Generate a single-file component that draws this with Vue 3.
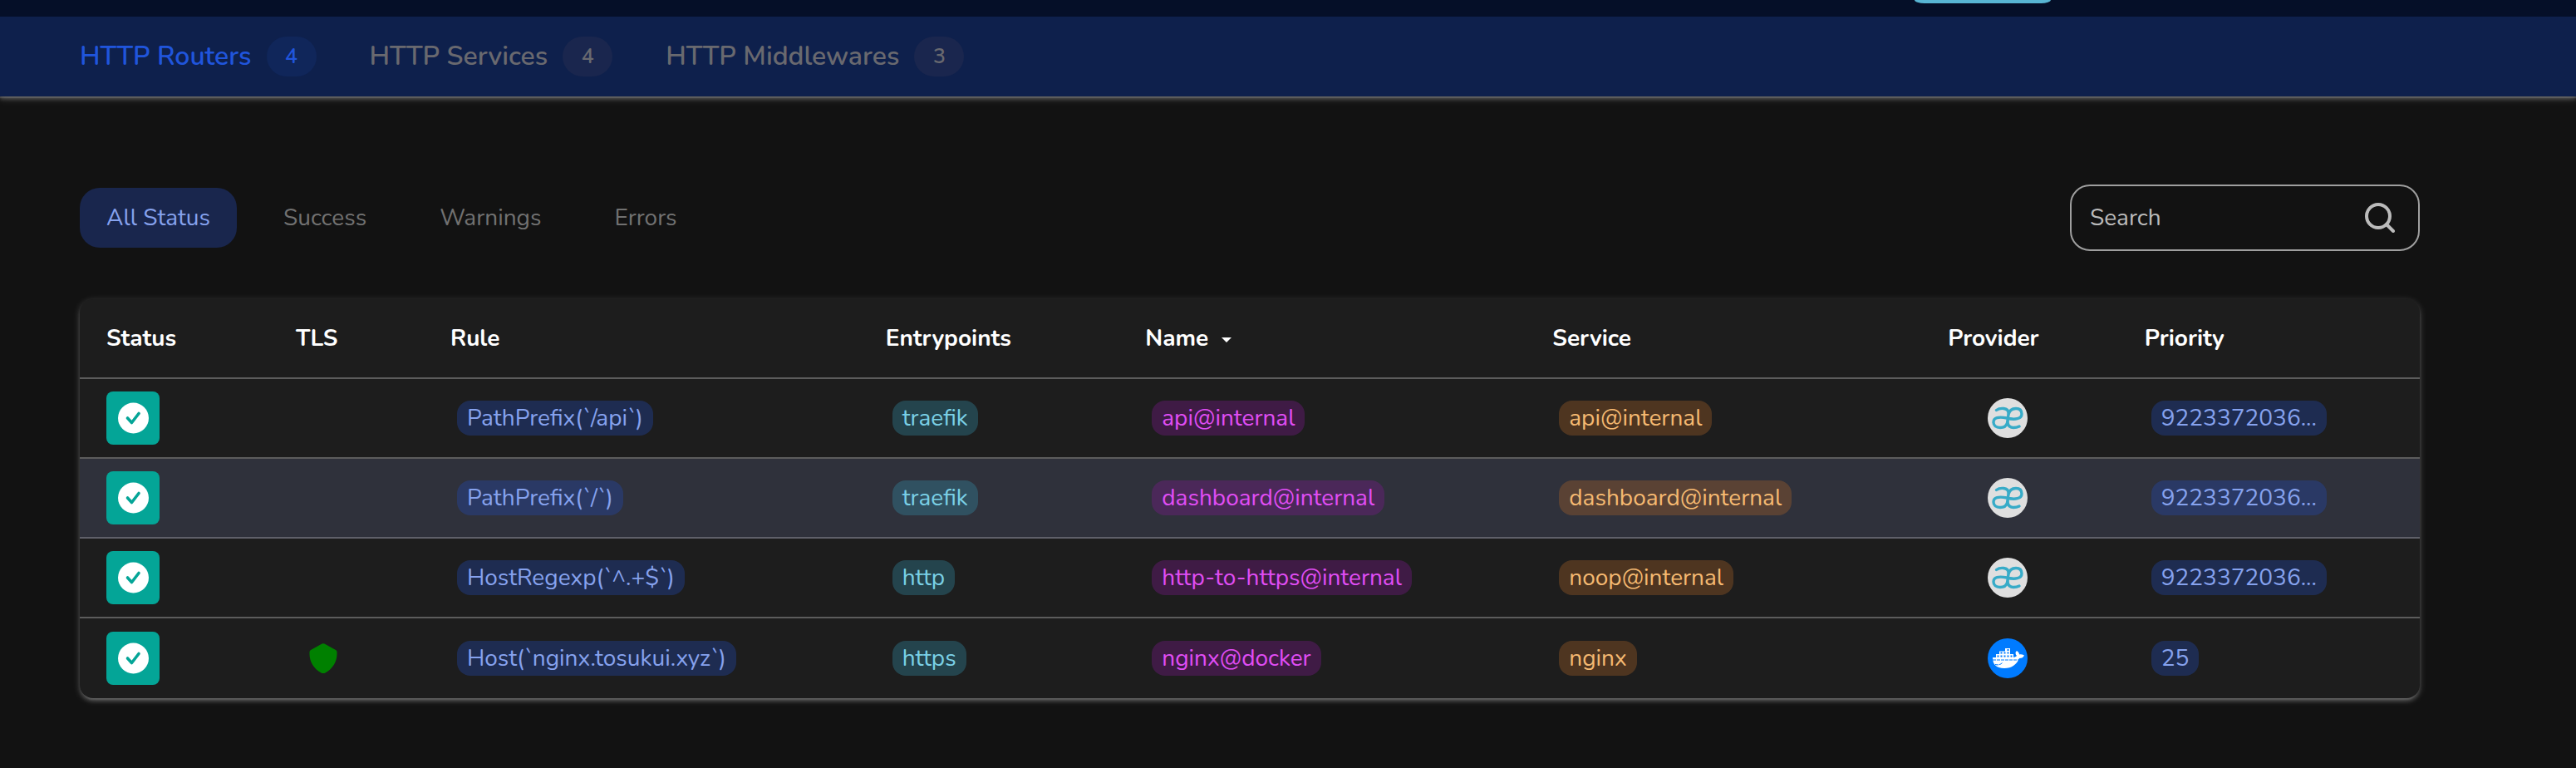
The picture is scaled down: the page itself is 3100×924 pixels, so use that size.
<template>
  <div class="page">
    <div class="top-bar"><span class="top-action"></span></div>

    <nav class="sub-nav">
      <a v-for="tab in tabs" :key="tab.label" href="#" :class="['tab', { active: tab.label === activeTab }]" @click.prevent="activeTab = tab.label">
        {{ tab.label }}
        <span class="tab-count">{{ tab.count }}</span>
      </a>
    </nav>

    <main class="content">
      <div class="toolbar">
        <div class="filters">
          <button
            v-for="filter in filters"
            :key="filter"
            type="button"
            :class="['filter', { active: filter === status }]"
            @click="status = filter"
          >{{ filter }}</button>
        </div>
        <label class="search">
          <input v-model="search" type="text" placeholder="Search" aria-label="Search" />
          <svg class="search-icon" viewBox="0 0 36 36" fill="none" stroke="#bbb" stroke-linecap="round">
            <circle cx="16" cy="16" r="14" stroke-width="4" />
            <path d="M26 26l8 8" stroke-width="4" />
          </svg>
        </label>
      </div>

      <div class="card">
        <table>
          <colgroup>
            <col v-for="col in columns" :key="col.key" :class="'col-' + col.key" />
          </colgroup>
          <thead>
            <tr>
              <th v-for="col in columns" :key="col.key">
                {{ col.label }}
                <svg v-if="col.key === 'name'" class="sort-icon" viewBox="0 0 12 6"><path d="M0 0h12l-6 6z" fill="#fff" /></svg>
              </th>
            </tr>
          </thead>
          <tbody>
            <tr v-for="row in rows" :key="row.name" :class="{ hovered: row.hovered }">
              <td>
                <span class="status-box">
                  <svg viewBox="0 0 38 38">
                    <circle cx="19.5" cy="19" r="18.500" fill="#fff" />
                    <path d="M12.500 19l5 5.500 8.500-11" fill="none" stroke="#04a597" stroke-width="3.600" stroke-linecap="round" stroke-linejoin="round" />
                  </svg>
                </span>
              </td>
              <td class="tls">
                <svg v-if="row.tls" class="shield" viewBox="0 0 34 36"><path d="M15.500.6q1.500-.9 3 0l13.500 7.400q1.500.9 1.500 2.500v2.500c0 9-5 17.500-14 22.500q-2.500 1-5 0C5.500 30.500.5 22 .5 13v-2.500q0-1.600 1.500-2.500z" fill="#008000" /></svg>
              </td>
              <td><span class="chip rule">{{ row.rule }}</span></td>
              <td><span class="chip entry">{{ row.entrypoint }}</span></td>
              <td><span class="chip name">{{ row.name }}</span></td>
              <td><span class="chip service">{{ row.service }}</span></td>
              <td class="provider">
                <svg v-if="row.provider === 'docker'" class="provider-icon" viewBox="0 0 48 48">
                  <circle cx="24" cy="24" r="24" fill="#007bff" />
                  <path d="M6 23h24c2 0 4-1 5-2-2-2-2-4.500 0-6 2 1 3 3 3 4.500 2-.5 4 0 6 1-1 2.500-3 3.500-6 3.500C35 31.500 29 36 20 36 10 36 6 31 6 23z" fill="#fff" />
                  <path d="M10 19h21v4H10zM14 15.500h13v4H14zM21 12h6v4h-6z" fill="#fff" />
                  <path d="M11.500 20.500h2v2h-2zm4 0h2v2h-2zm4 0h2v2h-2zm4 0h2v2h-2zm4 0h2v2h-2zm-12-4h2v2h-2zm4 0h2v2h-2zm4 0h2v2h-2zm0-3.500h2v2h-2z" fill="#007bff" />
                  <path d="M6 26h36M9 31.500c4 1 7 0 9-2.500" fill="none" stroke="#007bff" stroke-dasharray="4 1" />
                </svg>
                <svg v-else class="provider-icon" viewBox="0 0 48 48">
                  <circle cx="24" cy="24" r="24" fill="#dfdfdf" />
                  <path d="M10.500 14.500c4-3 14.500-3.500 14.500 3.500 0 4-1 8-1.500 12-1 3.500-4 5.500-8.500 5.500-5 0-8-2.500-8-6.500 0-5.500 6-7 16-5 10 2.500 18 1 18-5 0-4.500-3-6.500-7-6.500-5 0-8 2.500-9 7.500-1 6.500-3 15.500 6 15.500 3 0 5-.5 7-1.500" fill="none" stroke="#37abc8" stroke-width="3.400" stroke-linecap="round" />
                </svg>
              </td>
              <td><span class="chip rule">{{ row.priority }}</span></td>
            </tr>
          </tbody>
        </table>
      </div>
    </main>
  </div>
</template>

<script setup>
import { ref } from 'vue';

const activeTab = ref('HTTP Routers');
const status = ref('All Status');
const search = ref('');

const tabs = [
  { label: 'HTTP Routers', count: 4 },
  { label: 'HTTP Services', count: 4 },
  { label: 'HTTP Middlewares', count: 3 }
];

const filters = ['All Status', 'Success', 'Warnings', 'Errors'];

const columns = [
  { key: 'status', label: 'Status' },
  { key: 'tls', label: 'TLS' },
  { key: 'rule', label: 'Rule' },
  { key: 'entrypoints', label: 'Entrypoints' },
  { key: 'name', label: 'Name' },
  { key: 'service', label: 'Service' },
  { key: 'provider', label: 'Provider' },
  { key: 'priority', label: 'Priority' }
];

const rows = [
  { rule: 'PathPrefix(`/api`)', entrypoint: 'traefik', name: 'api@internal', service: 'api@internal', provider: 'internal', priority: '9223372036...' },
  { rule: 'PathPrefix(`/`)', entrypoint: 'traefik', name: 'dashboard@internal', service: 'dashboard@internal', provider: 'internal', priority: '9223372036...', hovered: true },
  { rule: 'HostRegexp(`^.+$`)', entrypoint: 'http', name: 'http-to-https@internal', service: 'noop@internal', provider: 'internal', priority: '9223372036...' },
  { rule: 'Host(`nginx.tosukui.xyz`)', entrypoint: 'https', name: 'nginx@docker', service: 'nginx', provider: 'docker', priority: '25', tls: true }
];
</script>

<style>
body {
  margin: 0;
  background: #121212;
}
</style>

<style scoped>
.page {
  min-height: 100vh;
  box-sizing: border-box;
  background: #121212;
  font-family: Nunito, "Open Sans", "Noto Sans", sans-serif;
  font-size: 28px;
  line-height: 40px;
}

.top-bar {
  position: relative;
  z-index: 1;
  display: flex;
  justify-content: flex-end;
  align-items: flex-start;
  height: 20px;
  padding-right: 632px;
  background: #050f28;
}

.top-action {
  width: 164px;
  height: 4px;
  background: #58b5d3;
  border-radius: 0 0 12px 12px / 0 0 4px 4px;
}

.sub-nav {
  display: flex;
  gap: 64px;
  height: 96px;
  padding: 0 96px;
  background: #0e204c;
  box-shadow: 0 2px 10px rgba(255, 255, 255, 0.2), 0 4px 4px rgba(255, 255, 255, 0.14), 0 2px 1px rgba(255, 255, 255, 0.12);
}

.tab {
  display: flex;
  align-items: center;
  gap: 18px;
  color: #69696f;
  font-size: 32px;
  font-weight: 600;
  text-decoration: none;
}

.tab-count {
  width: 60px;
  height: 48px;
  border-radius: 24px;
  background: #1a264e;
  font-size: 25px;
  line-height: 48px;
  text-align: center;
}

.tab.active {
  color: #2055dc;
}

.tab.active .tab-count {
  background: #10265a;
}

.content {
  padding: 106px 188px 84px 96px;
}

.toolbar {
  display: flex;
  justify-content: space-between;
  align-items: center;
  margin-bottom: 58px;
}

.filters {
  display: flex;
  gap: 24px;
}

.filter {
  height: 72px;
  padding: 0 32px;
  border: 0;
  border-radius: 24px;
  background: transparent;
  color: #717171;
  font: inherit;
  cursor: pointer;
}

.filter.active {
  background: #19264d;
  color: #86a2ee;
}

.search {
  display: flex;
  align-items: center;
  box-sizing: border-box;
  width: 421px;
  height: 80px;
  padding: 0 28px 0 22px;
  border: 2px solid #9f9f9f;
  border-radius: 24px;
}

.search input {
  flex: 1;
  min-width: 0;
  padding: 0;
  border: 0;
  outline: 0;
  background: transparent;
  color: #bbb;
  font: inherit;
}

.search input::placeholder {
  color: #bbb;
  opacity: 1;
}

.search-icon {
  width: 36px;
  height: 36px;
}

.card {
  overflow: hidden;
  border-radius: 16px;
  background: #1d1d1d;
  box-shadow: 0 2px 10px rgba(255, 255, 255, 0.2), 0 4px 4px rgba(255, 255, 255, 0.14), 0 6px 2px -4px rgba(255, 255, 255, 0.12);
}

table {
  width: 100%;
  table-layout: fixed;
  border-collapse: separate;
  border-spacing: 0;
}

.col-status { width: 8.1%; }
.col-tls { width: 6.6%; }
.col-rule { width: 18.6%; }
.col-entrypoints { width: 11.1%; }
.col-name { width: 17.4%; }
.col-service { width: 16.9%; }
.col-provider { width: 8.4%; }
.col-priority { width: 12.9%; }

th,
td {
  box-sizing: border-box;
  height: 96px;
  padding: 0 0 0 32px;
  border-bottom: 2px solid #5c5c5c;
  text-align: left;
  white-space: nowrap;
}

th {
  color: #fff;
  font-weight: 700;
}

tbody tr:last-child td {
  border-bottom: 0;
}

.hovered td {
  background: #2f313b;
  border-bottom-color: #5f6069;
}

td.tls {
  padding-left: 48px;
}

td.provider {
  padding-left: 80px;
}

td svg,
.status-box {
  display: block;
}

.sort-icon {
  width: 12px;
  height: 6px;
  margin-left: 8px;
  vertical-align: middle;
}

.status-box {
  width: 38px;
  height: 38px;
  padding: 13px;
  border-radius: 8px;
  background: #04a597;
}

.shield {
  width: 34px;
  height: 36px;
}

.provider-icon {
  width: 48px;
  height: 48px;
}

.chip {
  display: block;
  width: fit-content;
  margin-left: 8px;
  padding: 0 12px;
  border-radius: 16px;
  line-height: 42px;
}

.rule {
  background: rgba(33, 75, 180, 0.35);
  color: #86a2ee;
}

.entry {
  background: rgba(53, 142, 168, 0.35);
  color: #7ad0e6;
}

.name {
  background: rgba(128, 27, 147, 0.35);
  color: #e04df5;
}

.service {
  background: rgba(171, 101, 41, 0.35);
  color: #f5b971;
}
</style>
